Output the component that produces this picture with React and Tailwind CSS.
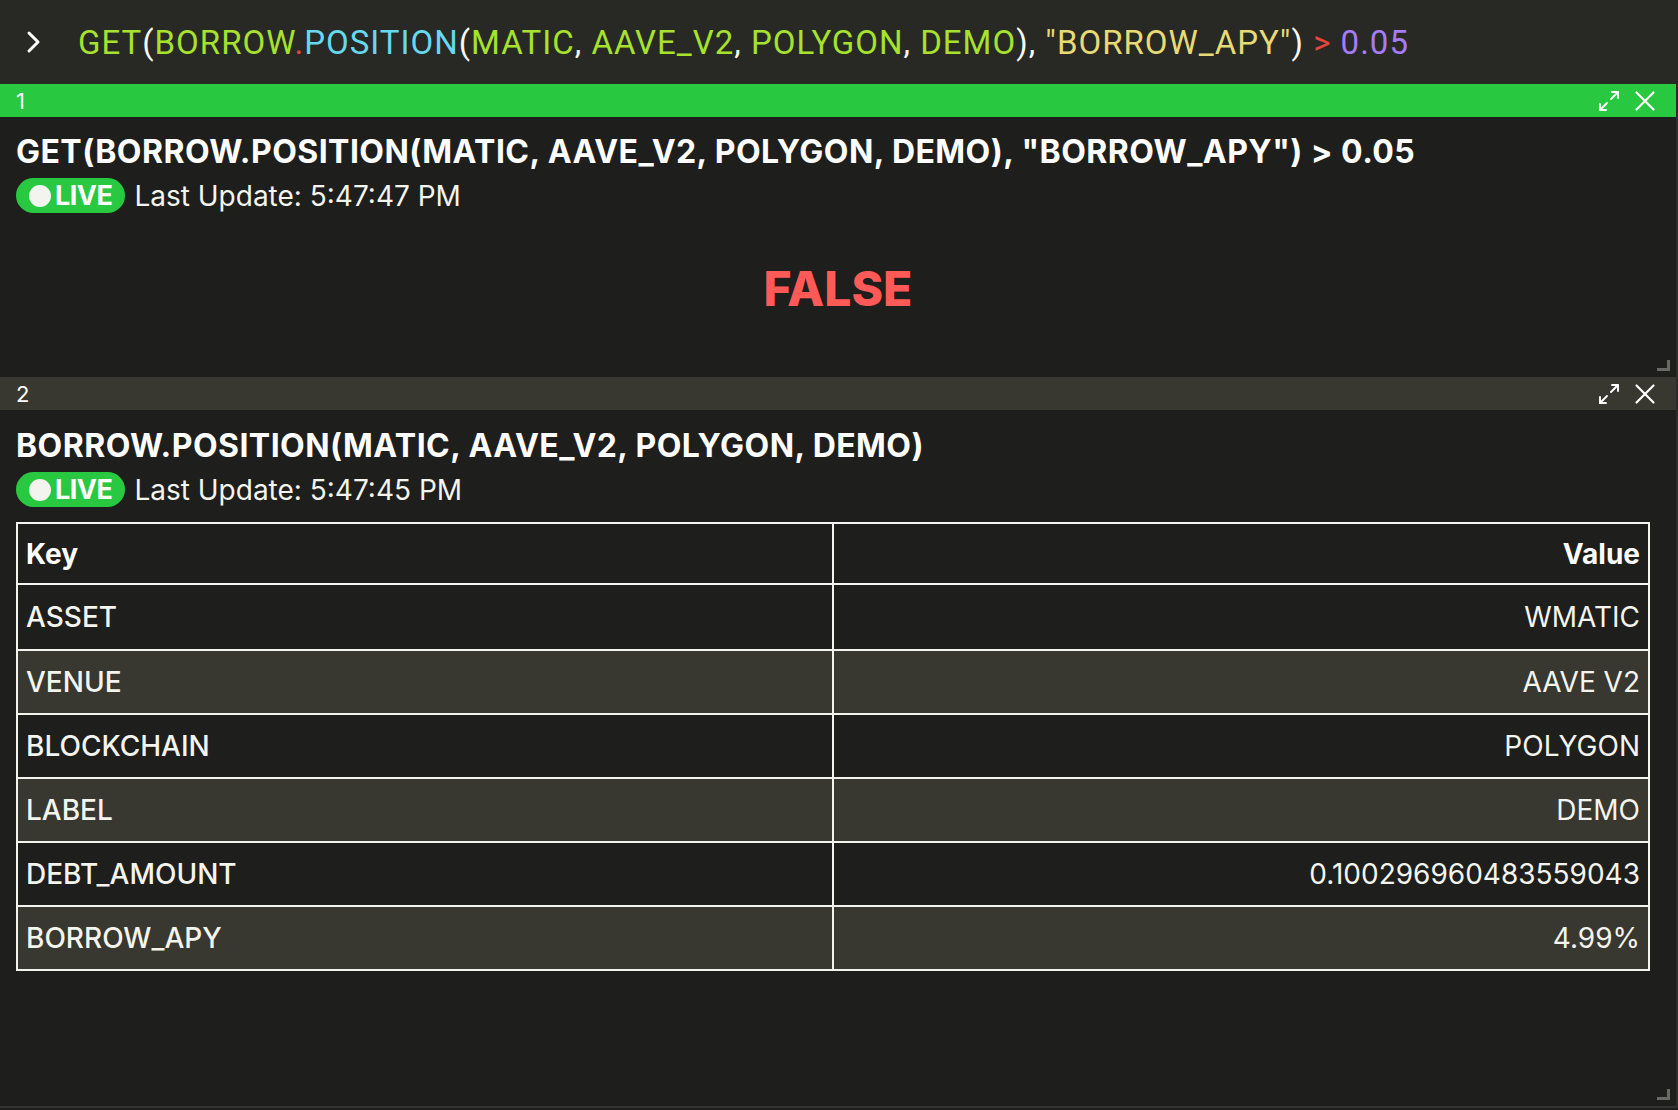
import React from "react";
import { Maximize2, X } from "lucide-react";

const G = "text-[#a6e22e]";
const W = "text-[#f8f8f2]";
const R = "text-[#e8453c]";
const B = "text-[#66d9ef]";
const Y = "text-[#e6db74]";
const P = "text-[#a67cf5]";

// command tokens, coloured like the editor does
const tokens = [
    ["GET", G], ["(", W], ["BORROW", G], [".", R], ["POSITION", B], ["(", W],
    ["MATIC", G], [", ", W], ["AAVE_V2", G], [", ", W], ["POLYGON", G], [", ", W],
    ["DEMO", G], [")", W], [", ", W], ['"BORROW_APY"', Y], [")", W], [" > ", R], ["0.05", P],
];

const rows = [
    ["ASSET", "WMATIC"],
    ["VENUE", "AAVE V2"],
    ["BLOCKCHAIN", "POLYGON"],
    ["LABEL", "DEMO"],
    ["DEBT_AMOUNT", "0.100296960483559043"],
    ["BORROW_APY", "4.99%"],
];

function Live({ time }) {
    return (
        <div className="flex items-center gap-[9px] mt-[10px]">
            <div className="flex items-center gap-[4px] h-[35px] pl-[13px] pr-[13px] rounded-full bg-[#28c940]">
                <div className="w-[22px] h-[22px] rounded-full bg-[#f4f4ee]"></div>
                <span className="text-[27px] font-bold text-white leading-none tracking-[-0.5px]">LIVE</span>
            </div>
            <span className="text-[28px] text-[#f4f4ee] leading-none">Last Update: {time}</span>
        </div>
    );
}

function Header({ n, active }) {
    return (
        <div className={`flex items-center justify-between h-[33px] pl-[16px] pr-[14px] ${active ? "bg-[#28c940]" : "bg-[#393830]"}`}>
            <span className="text-[22px] text-white leading-none">{n}</span>
            <div className="flex items-center gap-[7px] text-white">
                <Maximize2 size={24} strokeWidth={1.9} />
                <X size={34} strokeWidth={1.5} />
            </div>
        </div>
    );
}

function Grip() {
    return (
        <div className="absolute right-[6px] bottom-[6px] w-[13px] h-[11px] border-r-[3px] border-b-[3px] border-[#6a6a64]"></div>
    );
}

export default function App() {
    return (
        <div className="w-[1678px] h-[1110px] overflow-hidden bg-[#1e1e1c] font-['Inter',sans-serif]">
            <div className="flex items-center h-[84px] bg-[#282824] pl-[22px]">
                <svg width="22" height="26" viewBox="0 0 22 26" className="text-white">
                    <path d="M7 4 L16 13 L7 22" fill="none" stroke="currentColor" strokeWidth="3" strokeLinecap="round" strokeLinejoin="round" />
                </svg>
                <div className="ml-[34px] text-[33px] tracking-[1px] font-['Roboto',sans-serif] whitespace-pre leading-none">
                    {tokens.map(([t, c], i) => <span key={i} className={c}>{t}</span>)}
                </div>
            </div>

            <div className="border-r-[2px] border-[#2c2c28]">
                <div className="relative h-[293px] flex flex-col">
                    <Header n="1" active />
                    <div className="px-[16px] pt-[19px]">
                        <div className="text-[32px] font-bold text-white leading-none tracking-[0.45px]">
                            GET(BORROW.POSITION(MATIC, AAVE_V2, POLYGON, DEMO), "BORROW_APY") &gt; 0.05
                        </div>
                        <Live time="5:47:47 PM" />
                    </div>
                    <div className="flex justify-center mt-[52px]">
                        <span className="text-[48px] font-extrabold text-[#ff5a58] leading-none">FALSE</span>
                    </div>
                    <Grip />
                </div>

                <div className="relative h-[731px] flex flex-col border-b-[2px] border-[#333330]">
                    <Header n="2" />
                    <div className="px-[16px] pt-[20px]">
                        <div className="text-[32px] font-bold text-white leading-none tracking-[0.45px]">
                            BORROW.POSITION(MATIC, AAVE_V2, POLYGON, DEMO)
                        </div>
                        <Live time="5:47:45 PM" />
                        <table className="mt-[15px] w-[1634px] border-collapse border-[2px] border-[#f4f4ee] table-fixed">
                            <thead>
                                <tr className="h-[61px] bg-[#1e1e1c]">
                                    <th className="border-[2px] border-[#f4f4ee] text-left px-[8px] text-[28px] font-bold text-white">Key</th>
                                    <th className="border-[2px] border-[#f4f4ee] text-right px-[8px] text-[28px] font-bold text-white">Value</th>
                                </tr>
                            </thead>
                            <tbody>
                                {rows.map(([k, v], i) => (
                                    <tr key={k} className={`${i === 0 ? "h-[66px]" : "h-[64px]"} ${i % 2 ? "bg-[#393830]" : "bg-[#1e1e1c]"}`}>
                                        <td className="border-[2px] border-[#f4f4ee] px-[8px] text-[28px] font-medium text-[#f4f4ee]">{k}</td>
                                        <td className="border-[2px] border-[#f4f4ee] px-[8px] text-right text-[28px] text-[#f4f4ee]">{v}</td>
                                    </tr>
                                ))}
                            </tbody>
                        </table>
                    </div>
                    <Grip />
                </div>
            </div>
        </div>
    );
}
